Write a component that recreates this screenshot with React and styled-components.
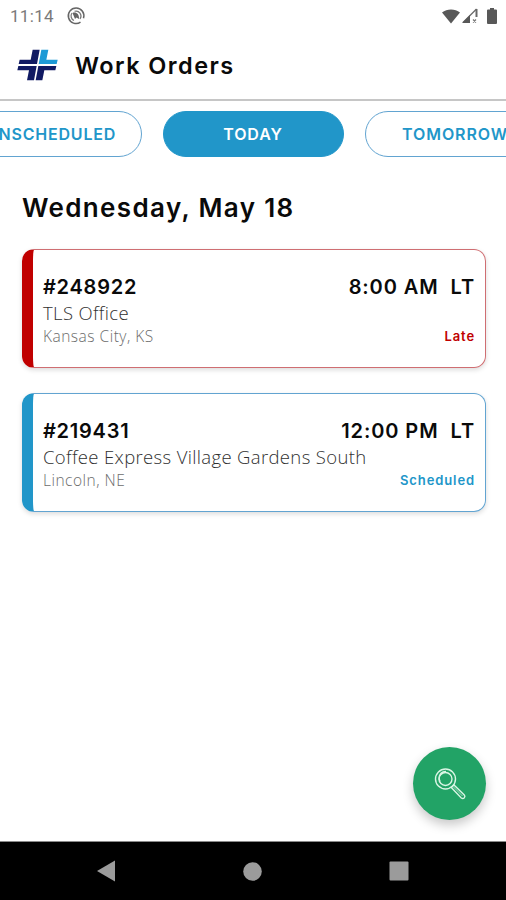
import { createGlobalStyle, styled } from "styled-components";

const BLUE = "#2196c9";
const RED = "#c00000";

const tabs = [
  { label: "UNSCHEDULED", spacing: 0.8 },
  { label: "TODAY", spacing: 0.9, active: true },
  { label: "TOMORROW", spacing: 0.9 },
];

const orders = [
  {
    id: "#248922",
    time: "8:00 AM",
    zone: "LT",
    name: "TLS Office",
    city: "Kansas City, KS",
    status: "Late",
    color: RED,
    border: "#cf6e72",
  },
  {
    id: "#219431",
    time: "12:00 PM",
    zone: "LT",
    name: "Coffee Express Village Gardens South",
    city: "Lincoln, NE",
    status: "Scheduled",
    color: BLUE,
    border: "#62a4d1",
  },
];

function StatusBar() {
  return (
    <StatusBarStyled>
      <span className="clock">11:14</span>
      <svg width="20" height="20" viewBox="0 0 20 20" fill="none">
        <path
          d="M14.500 16.200A7.800 7.800 0 1 1 17.500 12.200"
          stroke="#666"
          strokeWidth="1.500"
        />
        <path
          d="M8 14.500A5 5 0 0 1 6 7M8.500 5.300A5 5 0 0 1 14 13"
          stroke="#777"
          strokeWidth="1.200"
        />
        <path d="M6.500 7c3-1.500 7 .5 6.500 6l-2.500-1.500-1.500 1.500z" fill="#666" />
      </svg>
      <div className="system">
        <svg width="18" height="15" viewBox="0 0 18 15">
          <path d="M0 3.400C5-.6 13-.6 18 3.400L9 14.500z" fill="#585858" />
        </svg>
        <svg width="16" height="16" viewBox="0 0 16 16">
          <path d="M14.500 1v8" stroke="#686868" strokeWidth="2" />
          <path d="M1 14.500L14.500 1" stroke="#686868" strokeWidth="1.300" />
          <path d="M0 15L8 7v8z" fill="#585858" />
          <path
            d="M11 11.500l3 3m0-3l-3 3"
            stroke="#777"
            strokeWidth="1.200"
          />
        </svg>
        <svg width="10" height="16" viewBox="0 0 10 16">
          <path
            d="M3 0h4v1.500h2q1 0 1 1V15q0 1-1 1H1q-1 0-1-1V2.500q0-1 1-1h2z"
            fill="#585858"
          />
        </svg>
      </div>
    </StatusBarStyled>
  );
}

function Logo() {
  return (
    <svg width="41" height="32" viewBox="20 25 123 96">
      <path d="M67 27H88L80 70H25L28 57H61Z" fill="#101a63" />
      <path d="M93 27H114L108 57H142L139 70H85Z" fill="#1d9ad6" />
      <path d="M24 76H79L71 119H50L56 89H21Z" fill="#101a63" />
      <path d="M84 76H138L135 89H102L96 119H76Z" fill="#101a63" />
    </svg>
  );
}

function OrderCard({ order }) {
  return (
    <CardStyled $color={order.color} $border={order.border}>
      <div className="row">
        <Heading $size={20} $spacing={0.75}>
          {order.id}
        </Heading>
        <Heading $size={20} $spacing={0.9} className="time">
          <span>{order.time}</span>
          <span>{order.zone}</span>
        </Heading>
      </div>
      <p className="name">{order.name}</p>
      <div className="row">
        <p className="city">{order.city}</p>
        <p className="status">{order.status}</p>
      </div>
    </CardStyled>
  );
}

export default function App() {
  return (
    <Screen>
      <GlobalStyle />
      <StatusBar />
      <Header>
        <Logo />
        <Heading as="h1" $size={23.5} $spacing={1.45}>
          Work Orders
        </Heading>
      </Header>
      <Tabs>
        {tabs.map((tab) => (
          <Tab key={tab.label} $active={tab.active} $spacing={tab.spacing}>
            {tab.label}
          </Tab>
        ))}
      </Tabs>
      <Main>
        <Heading as="h2" $size={26} $spacing={1.35}>
          Wednesday, May 18
        </Heading>
        {orders.map((order) => (
          <OrderCard key={order.id} order={order} />
        ))}
      </Main>
      <SearchButton aria-label="Search">
        <svg width="34" height="34" viewBox="0 0 34 34" fill="none">
          <g stroke="#d9f5e4" strokeWidth="1.400">
            <circle cx="12.500" cy="12" r="10" />
            <circle cx="12.500" cy="12" r="6.500" />
            <path d="M7 14.500C4.500 9 8 4.500 13 4.500" />
            <path d="M18.300 20.500l10 10.500q1.700 1.200 3-.2 1.200-1.400 0-2.800L21 18z" />
            <path d="M20.500 20l9 9" strokeWidth="0.700" />
          </g>
        </svg>
      </SearchButton>
      <NavBar>
        <svg width="20" height="22" viewBox="-1 0 20 22">
          <path d="M0 11L18 .5v21z" fill="#9b9b9b" />
        </svg>
        <svg width="19" height="19" viewBox="0 0 19 19">
          <circle cx="9.500" cy="9.500" r="9.300" fill="#9b9b9b" />
        </svg>
        <svg width="20" height="20" viewBox="0 0 20 20">
          <rect x=".5" y=".5" width="19" height="19" rx="1" fill="#9b9b9b" />
        </svg>
      </NavBar>
    </Screen>
  );
}

const GlobalStyle = createGlobalStyle`
  * {
    box-sizing: border-box;
  }
  body, h1, h2, p {
    margin: 0;
  }
  body {
    background-color: #ffffff;
    overflow: hidden;
  }
`;

const Screen = styled.div`
  position: relative;
  display: flex;
  flex-direction: column;
  width: 506px;
  height: 900px;
  overflow: hidden;
  background-color: #ffffff;
  color: #0a0a0a;
  font-family: Inter, sans-serif;
`;

const Heading = styled.span`
  font-size: ${({ $size }) => $size}px;
  letter-spacing: ${({ $spacing }) => $spacing}px;
  font-weight: 600;
  line-height: 1.2;
  white-space: nowrap;
`;

const StatusBarStyled = styled.div`
  display: flex;
  align-items: center;
  flex: 0 0 32px;
  padding: 0 9px 0 10px;
  .clock {
    width: 56px;
    color: #7a7a7a;
    font-family: Roboto, sans-serif;
    font-size: 17px;
    letter-spacing: 0.3px;
  }
  .system {
    display: flex;
    align-items: center;
    gap: 2px;
    margin-left: auto;
    svg:last-child {
      margin-left: 7px;
    }
  }
`;

const Header = styled.header`
  display: flex;
  align-items: center;
  gap: 17px;
  flex: 0 0 69px;
  padding: 0 17px 1px;
  border-bottom: 2px solid #c6c6c6;
  h1 {
    padding-top: 3px;
  }
`;

const Tabs = styled.nav`
  display: flex;
  justify-content: center;
  gap: 21px;
  margin-top: 10px;
`;

const Tab = styled.button`
  flex: 0 0 181px;
  height: 46px;
  padding: 0;
  border: 1px solid ${({ $active }) => ($active ? BLUE : "#62a4d1")};
  border-radius: 23px;
  background-color: ${({ $active }) => ($active ? BLUE : "#ffffff")};
  color: ${({ $active }) => ($active ? "#ffffff" : BLUE)};
  font-family: inherit;
  font-size: 16px;
  font-weight: 600;
  letter-spacing: ${({ $spacing }) => $spacing}px;
`;

const Main = styled.main`
  display: flex;
  flex-direction: column;
  flex: 1;
  gap: 25px;
  padding: 35px 20px 0 22px;
  h2 {
    margin-bottom: 1px;
  }
`;

const CardStyled = styled.article`
  height: 119px;
  padding: 25px 11px 0 10px;
  border: 1px solid ${({ $border }) => $border};
  border-left: 11px solid ${({ $color }) => $color};
  border-radius: 12px;
  box-shadow: 0 2px 5px rgba(0, 0, 0, 0.14);
  .row {
    display: flex;
    align-items: center;
    justify-content: space-between;
  }
  .time {
    display: flex;
    gap: 12px;
    margin-right: -1px;
  }
  .name {
    color: #303030;
    font-family: "Open Sans", sans-serif;
    font-size: 18.5px;
    font-weight: 300;
    line-height: 27px;
    letter-spacing: 0.35px;
  }
  .city {
    color: #6c6c6c;
    font-family: "Open Sans", sans-serif;
    font-size: 15.5px;
    font-weight: 300;
    line-height: 20px;
    letter-spacing: 0.5px;
  }
  .status {
    color: ${({ $color }) => $color};
    font-size: 13px;
    font-weight: 600;
    letter-spacing: 0.9px;
    margin-right: -1px;
  }
`;

const SearchButton = styled.button`
  position: absolute;
  right: 20px;
  bottom: 80px;
  display: grid;
  place-items: center;
  width: 73px;
  height: 73px;
  padding: 0;
  border: none;
  border-radius: 50%;
  background-color: #22a366;
  box-shadow: 0 5px 11px rgba(0, 0, 0, 0.22);
`;

const NavBar = styled.footer`
  display: flex;
  align-items: center;
  justify-content: space-between;
  flex: 0 0 59px;
  padding: 0 97px 0 96px;
  border-top: 1px solid #8a8a8a;
  background-color: #000000;
`;
